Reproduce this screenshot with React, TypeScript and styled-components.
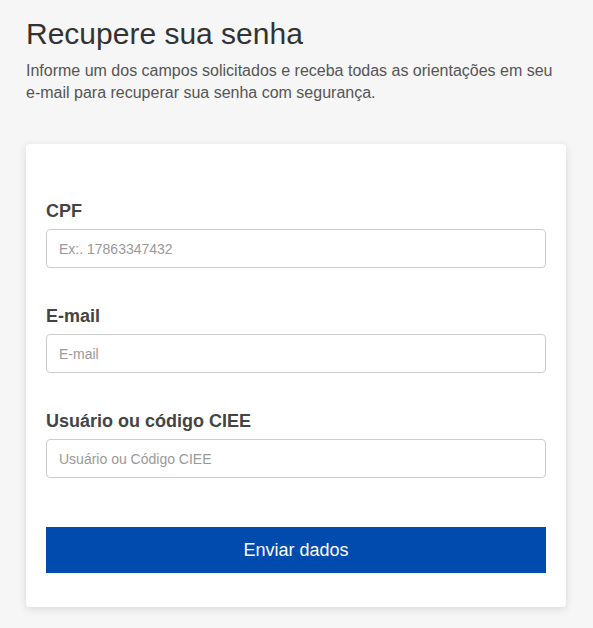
import React, { useState } from "react";
import styled, { createGlobalStyle } from "styled-components";

const GlobalStyle = createGlobalStyle`
  html, body {
    margin: 0;
    padding: 0;
    background-color: #f6f6f6;
  }
  body {
    font-family: "Liberation Sans", Arial, sans-serif;
  }
  * {
    box-sizing: border-box;
  }
`;

const Page = styled.main`
  width: 593px;
  min-height: 628px;
  padding: 16px 27px 20px 26px;
`;

const Title = styled.h1`
  margin: 0;
  font-size: 30px;
  font-weight: 400;
  line-height: 36px;
  color: #333;
`;

const Subtitle = styled.p`
  margin: 8px 0 0;
  font-size: 16px;
  line-height: 22px;
  color: #555;
`;

const Card = styled.form`
  margin-top: 40px;
  background: #fff;
  border-radius: 4px;
  box-shadow: 0 2px 8px rgba(0, 0, 0, 0.12);
  padding: 56px 20px 34px;
  display: flex;
  flex-direction: column;
`;

const Field = styled.div`
  display: flex;
  flex-direction: column;
  margin-bottom: 37px;
`;

const Label = styled.label`
  font-size: 18px;
  font-weight: 700;
  line-height: 22px;
  color: #444;
  margin-bottom: 7px;
`;

const Input = styled.input`
  height: 39px;
  width: 100%;
  padding: 0 12px;
  border: 1px solid #ccc;
  border-radius: 4px;
  font-family: "Liberation Sans", Arial, sans-serif;
  font-size: 14px;
  color: #333;
  background: #fff;
  outline: none;

  &::placeholder {
    color: #999;
  }
`;

const SubmitButton = styled.button`
  margin-top: 12px;
  height: 46px;
  width: 100%;
  border: none;
  background-color: #004bad;
  color: #fff;
  font-family: "Liberation Sans", Arial, sans-serif;
  font-size: 18px;
  cursor: pointer;
`;

const fields = [
  { id: "cpf", label: "CPF", placeholder: "Ex:. 17863347432" },
  { id: "email", label: "E-mail", placeholder: "E-mail" },
  { id: "usuario", label: "Usuário ou código CIEE", placeholder: "Usuário ou Código CIEE" },
];

const App: React.FC = () => {
  const [values, setValues] = useState<Record<string, string>>({});

  return (
    <Page>
      <GlobalStyle />
      <Title>Recupere sua senha</Title>
      <Subtitle>
        Informe um dos campos solicitados e receba todas as orientações em seu
        e-mail para recuperar sua senha com segurança.
      </Subtitle>
      <Card onSubmit={(event) => event.preventDefault()}>
        {fields.map((field) => (
          <Field key={field.id}>
            <Label htmlFor={field.id}>{field.label}</Label>
            <Input
              id={field.id}
              type="text"
              placeholder={field.placeholder}
              value={values[field.id] || ""}
              onChange={(event) =>
                setValues({ ...values, [field.id]: event.target.value })
              }
            />
          </Field>
        ))}
        <SubmitButton type="submit">Enviar dados</SubmitButton>
      </Card>
    </Page>
  );
};

export default App;
